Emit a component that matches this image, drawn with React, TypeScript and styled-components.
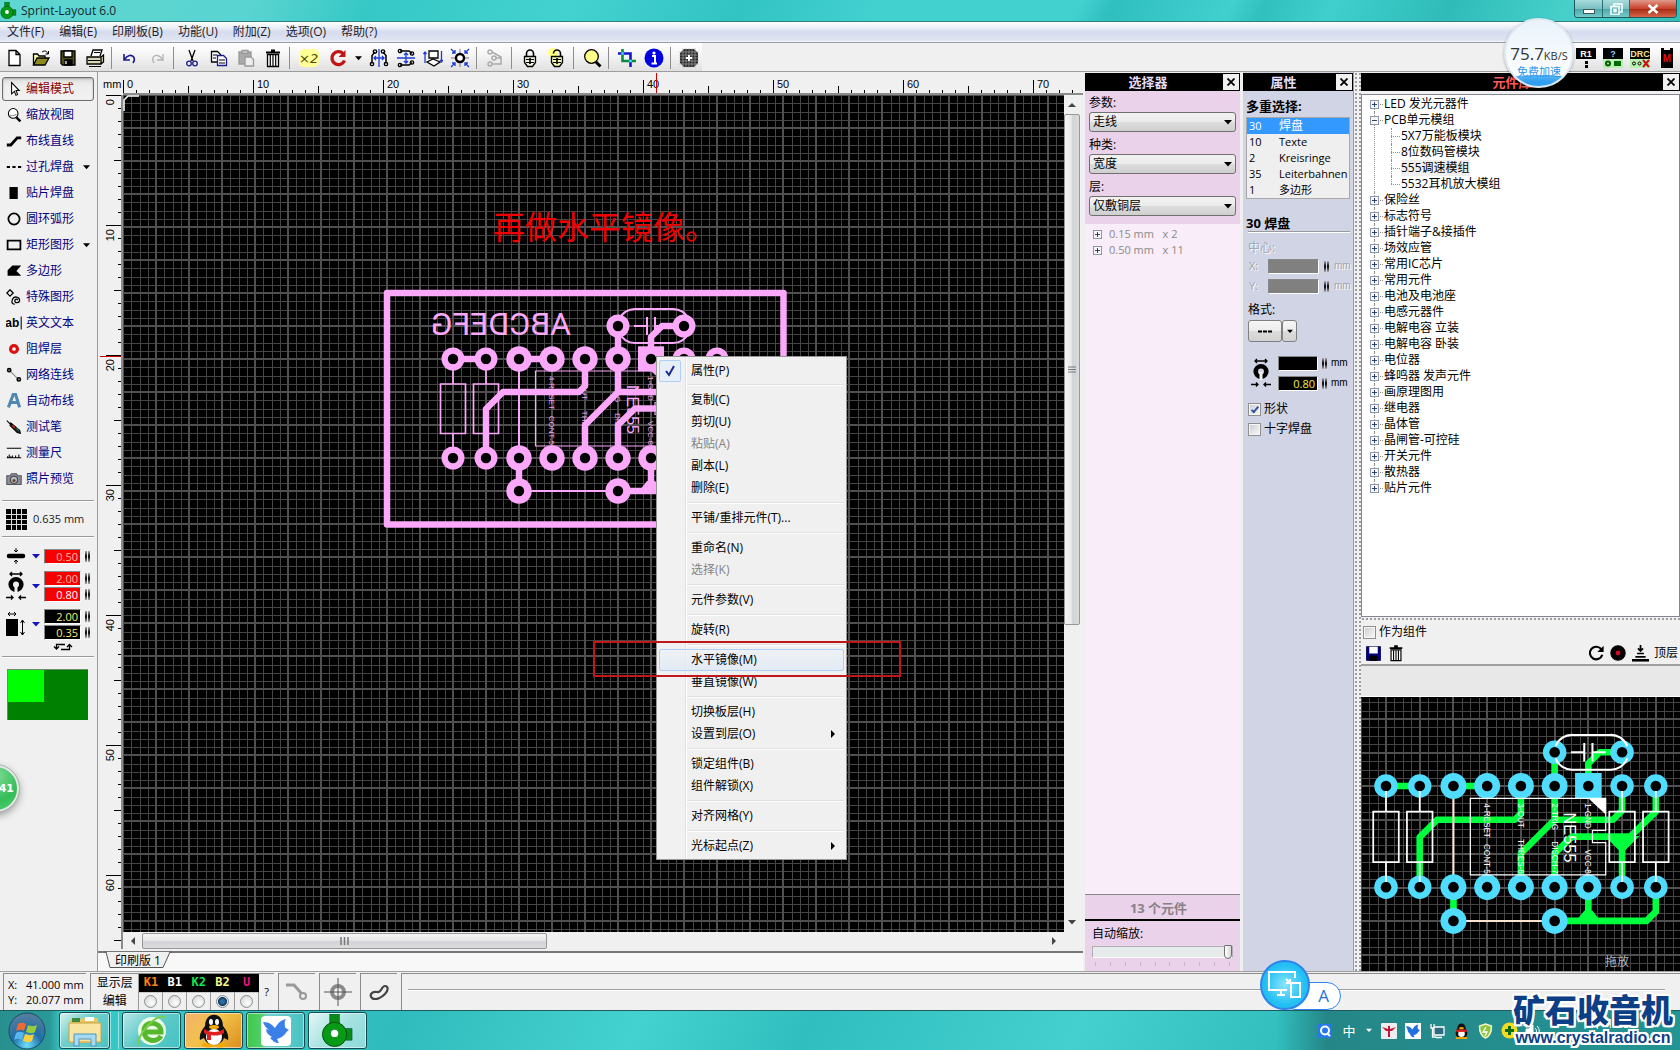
import React from "react";
import styled, { createGlobalStyle, css } from "styled-components";

const UI = `"Open Sans", "Noto Sans CJK SC", sans-serif`;

const Global = createGlobalStyle`
  *, *::before, *::after { box-sizing: border-box; }
  html, body { margin: 0; padding: 0; }
  body { font: 12px/16px ${UI}; color: #000; background: #f0f0f0; }
  button, input, select { font: inherit; color: inherit; margin: 0; padding: 0; border: 0; border-radius: 0; background: none; }
  ul { list-style: none; margin: 0; padding: 0; }
  svg { display: block; }
`;

/* ---------- window frame ---------- */

const Window = styled.div`
  display: flex;
  flex-direction: column;
  min-height: 100vh;
  position: relative;
  overflow: hidden;
`;

const TitleBar = styled.header`
  display: flex;
  justify-content: space-between;
  height: 22px;
  border-bottom: 1px solid #2a7f80;
  background: linear-gradient(115deg, #5ed6d2 0, #5ad4d0 15%, #35c8c6 22%, #44d2d0 34%, #32c3c3 44%, #43d1d0 52%, #43d1d0 64%, #30bfbf 66%, #42d0cf 73%, #32c0bf 75%, #40cfcd 79%, #2fbcb9 86%, #47d0ca 93%, #35bdb7 100%);
`;

const Caption = styled.h1`
  display: flex;
  align-items: center;
  gap: 4px;
  margin: 0;
  padding-right: 12px;
  font-size: 12px;
  font-weight: 400;
  color: #12292b;
`;

const CaptionButtons = styled.div`
  display: flex;
  height: 18px;
  margin-right: 3px;
  border: 1px solid #20595c;
  border-top: 0;
  border-radius: 0 0 4px 4px;
  overflow: hidden;
`;

const CaptionButton = styled.button<{ $close?: boolean }>`
  display: grid;
  place-items: center;
  width: ${p => (p.$close ? 47 : 27)}px;
  border-left: 1px solid #2a6f72;
  background: ${p => (p.$close ? "linear-gradient(#e0998a, #c8432c 50%, #a82c16 55%, #d8674b)" : "linear-gradient(#a9dcdc, #7bc1c2 50%, #4da9ab 55%, #74cccb)")};
  &:first-child { border-left: 0; }
`;

const MenuBar = styled.nav`
  display: flex;
  gap: 15px;
  height: 21px;
  padding: 0 7px;
  border-bottom: 1px solid #9a9ca6;
  background: linear-gradient(#ffffff, #e9edf6 30%, #d6dcee 50%, #dfe4f3 90%, #f4f5fa);
`;

const MenuTitle = styled.button`
  font-size: 12px;
  line-height: 20px;
  color: #1d1d2b;
`;

const ToolBar = styled.div`
  display: flex;
  justify-content: space-between;
  height: 29px;
  border-bottom: 1px solid #9d9d9d;
  background: #f0f0f0;
`;

const ToolGroup = styled.div`
  display: flex;
  align-items: center;
  padding-top: 2px;
  background: linear-gradient(#ffffff, #f6f6f6 40%, #e0e0e0);
`;

const ToolButton = styled.button<{ $w?: number }>`
  display: grid;
  place-items: center;
  width: ${p => p.$w ?? 27}px;
  height: 26px;
`;

const Divider = styled.span`
  width: 1px;
  height: 22px;
  margin: 0 4px 0 3px;
  background: #8e8e8e;
`;

const Workspace = styled.main`
  flex: 1;
  display: grid;
  grid-template-columns: 98px minmax(0, 1fr) 160px 110px 8px 319px;
`;

/* ---------- left tools ---------- */

const ToolPanel = styled.aside`
  border-right: 1px solid #9a9a9a;
`;

const ToolList = styled.div`
  padding: 5px 0 7px;
`;

const Tool = styled.button<{ $active?: boolean }>`
  display: flex;
  align-items: center;
  width: 92px;
  height: 24px;
  margin: 0 3px 2px 2px;
  padding: 0 3px;
  gap: 4px;
  border: 1px solid transparent;
  border-radius: 3px;
  color: #000080;
  white-space: nowrap;
  svg + svg { margin-left: auto; }
  ${p => p.$active && css`
    color: #8b0000;
    border-color: #6f6f6f;
    background: linear-gradient(#dcdcdc, #ededed 30%, #f2f2f2);
    box-shadow: inset 0 1px 2px #aaa;
  `}
`;

const Rule = styled.hr`
  height: 2px;
  margin: 0 3px 0 2px;
  border: 0;
  border-top: 1px solid #9a9a9a;
  border-bottom: 1px solid #fff;
`;

const GridSetting = styled.button`
  display: flex;
  align-items: center;
  gap: 6px;
  height: 34px;
  padding-left: 6px;
  font-size: 11px;
  color: #1b1b1b;
`;

const SizeGroups = styled.div`
  display: flex;
  flex-direction: column;
  gap: 6px;
  padding: 10px 6px 2px;
`;

const SizeGroup = styled.div`
  display: grid;
  grid-template-columns: 20px 18px 37px 1fr;
  align-items: center;
  > svg:nth-child(2) { justify-self: center; margin-left: 2px; }
`;

const Stack = styled.div`
  display: flex;
  flex-direction: column;
`;

const SpinRow = styled.div<{ $h?: number }>`
  display: flex;
  align-items: center;
  gap: 4px;
  height: ${p => p.$h ?? 16}px;
`;

const ValueInput = styled.input<{ $bg: string; $fg: string; $w?: number }>`
  width: ${p => p.$w ?? 37}px;
  flex: none;
  height: 15px;
  padding-right: 2px;
  border: 1px solid #fff;
  border-top-color: #888;
  border-left-color: #888;
  background: ${p => p.$bg};
  color: ${p => p.$fg};
  font-size: 11px;
  line-height: 13px;
  text-align: right;
`;

const SpinHandle = styled.span`
  flex: none;
  justify-self: center;
  width: 5px;
  height: 11px;
  border: 2px solid #1d1d26;
  border-width: 0 2px;
  border-image: linear-gradient(#d6d6d6, #111 45%, #111 55%, #d6d6d6) 1;
  border-image-width: 0 2px;
`;

const SwapRow = styled.div`
  display: flex;
  justify-content: center;
  padding-left: 28px;
  height: 14px;
`;

const PadSwatch = styled.div`
  display: flex;
  width: 81px;
  height: 51px;
  margin: 11px 7px;
  background: #008000;
  border: 1px solid #6b8c6b;
  border-width: 1px 0 0 1px;
  &::before { content: ""; width: 36px; height: 32px; background: #00ff00; }
`;

/* ---------- editor ---------- */

const Editor = styled.section`
  display: grid;
  grid-template-columns: 25px minmax(0, 1fr) 19px;
  grid-template-rows: 23px minmax(0, 1fr) 17px 22px;
  min-height: 600px;
`;

const RulerUnit = styled.div`
  padding: 5px 0 0 5px;
  font: 11px/14px "Liberation Sans", sans-serif;
`;

const RulerTop = styled.div`
  grid-column: 2 / 4;
  position: relative;
  overflow: hidden;
  border-bottom: 2px solid #8b8b8b;
`;

const RulerLeft = styled.div`
  grid-row: 2 / 4;
  position: relative;
  overflow: hidden;
  border-right: 2px solid #8b8b8b;
`;

const FillSvg = styled.svg`
  position: absolute;
  inset: 0;
  width: 100%;
  height: 100%;
`;

const Canvas = styled.div`
  position: relative;
  background: #000;
  overflow: hidden;
`;

const Note = styled.p`
  position: absolute;
  left: 370px;
  top: 108px;
  margin: 0;
  font: 32px/44px "Noto Sans CJK SC", sans-serif;
  color: #f00000;
  white-space: nowrap;
`;

const RedFrame = styled.div`
  position: absolute;
  left: 470px;
  top: 546px;
  width: 308px;
  height: 36px;
  border: 2px solid #c01818;
  pointer-events: none;
`;

const ScrollV = styled.div`
  display: flex;
  flex-direction: column;
  width: 16px;
  background: #f0f0f0;
`;

const ScrollH = styled.div`
  display: flex;
  height: 16px;
  margin-top: 1px;
`;

const ArrowButton = styled.button<{ $v?: boolean }>`
  display: grid;
  place-items: center;
  width: ${p => (p.$v ? 16 : 19)}px;
  height: ${p => (p.$v ? 19 : 16)}px;
`;

const Thumb = styled.div<{ $v?: boolean }>`
  display: grid;
  place-items: center;
  flex: ${p => (p.$v ? "0 0 61%" : "0 0 43%")};
  border: 1px solid #979797;
  border-radius: 2px;
  background: linear-gradient(${p => (p.$v ? "90deg" : "180deg")}, #f5f5f5, #e8e8ea 45%, #d2d3d6 55%, #dcdcde);
`;

const Spacer = styled.span`
  flex: 1;
`;

const TabStrip = styled.div`
  grid-column: 1 / 4;
  margin-top: 2px;
  border-top: 2px solid #777;
  background: #f8f8f8;
`;

const SheetTab = styled.button`
  position: relative;
  display: block;
  width: 68px;
  height: 16px;
  margin-left: 6px;
  line-height: 14px;
  svg { position: absolute; left: 0; top: -2px; }
  span { position: relative; }
`;

/* ---------- context menu ---------- */

const ContextMenu = styled.ul`
  position: absolute;
  left: 533px;
  top: 261px;
  width: 191px;
  padding: 2px;
  border: 1px solid #979797;
  background: linear-gradient(90deg, #f1f1f1 28px, #e0e0e0 28px, #e0e0e0 29px, #fff 29px, #fff 30px, #f0f0f0 30px);
`;

const MenuItem = styled.button<{ $hot?: boolean }>`
  display: grid;
  grid-template-columns: 31px 1fr 12px;
  align-items: center;
  width: 100%;
  height: 22px;
  text-align: left;
  border: 1px solid transparent;
  border-radius: 2px;
  &:disabled { color: #848484; }
  ${p => p.$hot && css`
    border-color: #aecff7;
    background: linear-gradient(#eef2f7cc, #dfe9f5cc);
  `}
`;

const CheckCell = styled.span`
  display: grid;
  place-items: center;
  width: 22px;
  height: 22px;
  margin-left: -1px;
  border: 1px solid #aecff7;
  border-radius: 2px;
  background: #e6eef8;
`;

const MenuRule = styled.li`
  height: 8px;
  margin-left: 28px;
  padding-top: 3px;
  &::before { content: ""; display: block; height: 2px; border-top: 1px solid #e0e0e0; border-bottom: 1px solid #fff; }
`;

/* ---------- docked panels ---------- */

const Dock = styled.aside<{ $bg: string; $pl?: number }>`
  display: flex;
  flex-direction: column;
  padding: 1px ${p => (p.$pl ? 3 : 0)}px 0 ${p => p.$pl ?? 0}px;
  background: ${p => p.$bg};
`;

const PanelTitle = styled.h2<{ $fg?: string }>`
  display: flex;
  align-items: center;
  flex: none;
  height: 18px;
  margin: 0;
  padding-right: 1px;
  background: #000;
  color: ${p => p.$fg ?? "#e4dcf4"};
  font-size: 13px;
  font-weight: 700;
  line-height: 18px;
  span { flex: 1; text-align: center; padding-right: ${p => (p.$fg ? 0 : 12)}px; }
`;

const CloseButton = styled.button`
  display: grid;
  place-items: center;
  width: 16px;
  height: 16px;
  background: #f0f0f0;
`;

const DockBody = styled.div<{ $bg: string; $p?: string; $grow?: boolean }>`
  flex: ${p => (p.$grow ? 1 : "none")};
  padding: ${p => p.$p ?? "0"};
  background: ${p => p.$bg};
`;

const Field = styled.label`
  display: block;
  height: 42px;
  line-height: 18px;
`;

const SelectWrap = styled.span`
  position: relative;
  display: block;
  height: 20px;
  svg { position: absolute; right: 4px; top: 8px; pointer-events: none; }
`;

const Select = styled.select`
  appearance: none;
  width: 100%;
  height: 20px;
  padding-left: 3px;
  border: 1px solid #707070;
  border-radius: 3px;
  background: linear-gradient(#f2f2f2, #ebebeb 50%, #dddddd 51%, #cfcfcf);
`;

const GroupRow = styled.button`
  display: flex;
  align-items: center;
  gap: 7px;
  height: 16px;
  color: #8a8a8a;
  font-size: 11px;
  white-space: pre;
`;

const Count = styled.div`
  height: 27px;
  border-top: 1px solid #888;
  border-bottom: 2px solid #000;
  background: #ead3ea;
  color: #8a8088;
  font-size: 13px;
  font-weight: 700;
  line-height: 26px;
  text-align: center;
  padding-right: 8px;
`;

const SliderLabel = styled.label`
  display: block;
  margin-bottom: 4px;
`;

const Slider = styled.input`
  appearance: none;
  display: block;
  width: 100%;
  height: 12px;
  border: 1px solid #b0b0b0;
  border-bottom-color: #fff;
  background: #e7eaea;
  &::-webkit-slider-thumb {
    appearance: none;
    width: 8px;
    height: 14px;
    border: 1px solid #707070;
    border-radius: 1px 1px 4px 4px;
    background: linear-gradient(90deg, #fff, #d6d6d6);
  }
`;

const Ticks = styled.div`
  display: flex;
  justify-content: space-between;
  margin: 4px 3px 0;
  i { width: 1px; height: 4px; background: #c9b5c9; }
`;

const Heading = styled.h3`
  margin: 0;
  font-size: 13px;
  font-weight: 700;
  line-height: 16px;
`;

const ObjectTable = styled.table`
  width: 104px;
  margin: 3px 0 16px;
  border: 1px solid #a8a8a8;
  border-spacing: 0;
  background: #efefef;
  font-size: 11px;
  td { height: 16px; padding: 0 0 0 2px; line-height: 16px; white-space: nowrap; }
  td:first-child { width: 30px; }
`;

const ObjectRow = styled.tr<{ $on?: boolean }>`
  ${p => p.$on && css`background: #3399ff; color: #fff;`}
  td + td { font-size: ${p => (p.$on ? 12 : 11)}px; }
`;

const Unit = styled.span`
  font: 10px/16px "Liberation Sans", sans-serif;
`;

const Axis = styled.label`
  display: grid;
  grid-template-columns: 19px 51px 15px 1fr;
  align-items: center;
  height: 20px;
  padding-left: 3px;
  font-size: 11px;
  color: #a3a5b0;
  text-shadow: 1px 1px #fff;
`;

const Muted = styled.p`
  height: 23px;
  margin: 0;
  padding: 7px 2px 0;
  color: #a3a5b0;
  text-shadow: 1px 1px #fff;
`;

const FormLabel = styled.p`
  height: 24px;
  margin: 0;
  padding: 6px 2px 0;
`;

const FormRow = styled.div`
  display: flex;
  padding: 0 0 11px 2px;
`;

const FlatButton = styled.button<{ $w: number }>`
  display: grid;
  place-items: center;
  width: ${p => p.$w}px;
  height: 22px;
  border: 1px solid #808080;
  border-radius: 3px;
  background: linear-gradient(#f6f6f6, #ececec 50%, #dcdcdc 52%, #d2d2d2);
`;

const HoleRow = styled.div`
  display: grid;
  grid-template-columns: 27px 1fr;
  align-items: center;
  padding: 0 0 6px 5px;
`;

const CheckLine = styled.label`
  display: flex;
  align-items: center;
  gap: 3px;
  height: 20px;
  padding-left: 2px;
  white-space: nowrap;
`;

const CheckBox = styled.input`
  appearance: none;
  display: grid;
  place-items: center;
  width: 13px;
  height: 13px;
  border: 1px solid #8e8f8f;
  background: linear-gradient(135deg, #c9ccd0, #fafafa);
  box-shadow: inset 0 0 0 1px #f6f6f6;
  &:checked::after {
    content: "";
    width: 4px;
    height: 8px;
    border: solid #33509e;
    border-width: 0 2px 2px 0;
    transform: rotate(40deg);
  }
`;

const dots = "radial-gradient(circle, #9c9c9c 0.7px, transparent 1px) 0 0 / 4px 4px #f0f0f0";

const Splitter = styled.div`
  border-left: 1px solid #9a9a9a;
  background: ${dots};
`;

const SplitterH = styled.div`
  height: 5px;
  background: ${dots};
`;

const TreeBox = styled.div`
  height: 523px;
  margin-top: 3px;
  padding: 1px 0 0 8px;
  border: 1px solid #828790;
  background: #fff;
`;

const Node = styled.li<{ $first?: boolean; $last?: boolean }>`
  position: relative;
  &::before {
    content: "";
    position: absolute;
    left: 4px;
    top: ${p => (p.$first ? 8 : 0)}px;
    bottom: ${p => (p.$last ? "8px" : "0")};
    border-left: 1px dotted #909090;
  }
  ul { padding-left: 17px; }
`;

const NodeRow = styled.button<{ $sel?: boolean }>`
  display: flex;
  align-items: center;
  height: 16px;
  position: relative;
  white-space: nowrap;
  &::before { content: ""; position: absolute; left: 4px; top: 8px; width: 9px; border-top: 1px dotted #909090; }
  svg { position: relative; margin-right: 5px; }
  span { background: ${p => (p.$sel ? "#efefef" : "transparent")}; }
`;

const Gap = styled.i`
  width: 14px;
`;

const PreviewBar = styled.div`
  display: flex;
  align-items: center;
  gap: 5px;
  height: 24px;
  padding: 0 2px 0 4px;
  border-bottom: 2px solid #a0a0a0;
`;

const IconButton = styled.button`
  display: grid;
  place-items: center;
  min-width: 17px;
  height: 20px;
`;

const Blank = styled.div`
  height: 31px;
  border-bottom: 1px solid #fff;
  background: #e8e8e8;
`;

const Preview = styled.div`
  position: relative;
  flex: 1;
  background: #000;
  overflow: hidden;
`;

/* ---------- status bar ---------- */

const StatusBar = styled.footer`
  display: flex;
  gap: 4px;
  height: 39px;
  padding: 1px 0 0 3px;
  border-top: 1px solid #a0a0a0;
  background: #f0f0f0;
`;

const Cell = styled.div<{ $w?: number }>`
  display: flex;
  align-items: center;
  justify-content: center;
  ${p => (p.$w ? `width: ${p.$w}px` : "flex: 1")};
  border-top: 1px solid #8c8c8c;
  border-left: 1px solid #8c8c8c;
`;

const Coords = styled.dl`
  display: grid;
  grid-template-columns: 18px 56px;
  margin: 0;
  font-size: 11px;
  line-height: 15px;
  dt, dd { margin: 0; white-space: nowrap; }
  dd { text-align: right; }
`;

const LayerTable = styled.table`
  border-collapse: collapse;
  text-align: center;
  th, td { padding: 0; font-weight: 400; }
  tbody th { width: 48px; border-right: 1px solid #999; }
  tr { height: 18px; }
  tr + tr td { border-right: 1px solid #999; border-top: 1px solid #ccc; }
`;

const LayerName = styled.td<{ $fg: string }>`
  width: 24px;
  background: #000;
  color: ${p => p.$fg};
  font: 12px/17px "DejaVu Sans Mono", monospace;
  b { font-weight: 700; }
`;

const Radio = styled.input`
  appearance: none;
  display: block;
  width: 13px;
  height: 13px;
  margin: 2px auto;
  border: 1px solid #8e8f8f;
  border-radius: 50%;
  background: radial-gradient(circle at 60% 60%, #fff, #c9cccf);
  &:checked { background: radial-gradient(circle, #2a6ea0 0 2px, #0c3358 4px, #e8e8e8 5px); }
`;

const Help = styled.button`
  width: 15px;
  font-size: 11px;
`;

const StatusLine = styled.span`
  flex: 1;
  height: 2px;
  margin: 0 15px 4px 6px;
  border-top: 1px solid #a0a0a0;
  background: #fff;
`;

/* ---------- taskbar ---------- */

const TaskBar = styled.footer`
  display: flex;
  align-items: stretch;
  gap: 3px;
  height: 40px;
  padding: 1px 0 1px 6px;
  border-top: 1px solid #1b5b60;
  background:
    linear-gradient(90deg, #24807fcc 0, #24807faa 50px, transparent 62px, transparent 76%, #23797bcc 79%, #1f8d8ccc 100%),
    linear-gradient(115deg, #38cccb 0, #30bcbc 24%, #44d2d0 38%, #31bebe 48%, #43d0cf 64%, #2fbcbb 78%, #2fb0ae 100%);
`;

const StartButton = styled.button`
  width: 42px;
  margin-right: 8px;
  display: grid;
  place-items: center;
`;

const TaskButton = styled.button<{ $bg: string; $w?: number }>`
  display: grid;
  place-items: center;
  width: ${p => p.$w ?? 59}px;
  border: 1px solid #164a50;
  border-radius: 3px;
  box-shadow: inset 0 0 0 1px #ffffff88;
  background: ${p => p.$bg};
`;

const StackEdge = styled.i`
  width: 9px;
  margin-left: -3px;
  border: 1px solid #c4efee;
  border-width: 0 1px;
  opacity: 0.7;
`;

const Tray = styled.div`
  display: flex;
  align-items: center;
  gap: 4px;
  margin-left: auto;
  padding-right: 137px;
  color: #fff;
`;

const TrayButton = styled.button<{ $w?: number }>`
  display: grid;
  place-items: center;
  width: ${p => p.$w ?? 20}px;
  height: 24px;
  font-size: 13px;
`;

/* ---------- floating widgets ---------- */

const SpeedBall = styled.div`
  position: absolute;
  right: 106px;
  top: 18px;
  width: 70px;
  height: 70px;
  border: 2px solid #dfe8f0;
  border-radius: 50%;
  overflow: hidden;
  text-align: center;
  white-space: nowrap;
  background: radial-gradient(ellipse 60px 18px at 50% 110%, #2f9df0 0 60%, #58b4f6 96%, transparent 100%), linear-gradient(#eaf3fb, #ffffff);
  box-shadow: 0 1px 3px #0005;
  p { margin: 24px 0 0; font-size: 17px; line-height: 20px; color: #333; }
  small { font-size: 11px; }
  b { display: block; font-size: 11px; font-weight: 400; line-height: 12px; color: #2b95ea; }
`;

const CountBall = styled.div`
  position: absolute;
  left: -28px;
  top: 765px;
  width: 47px;
  height: 47px;
  border: 2px solid #e3e8e4;
  border-radius: 50%;
  outline: 1px solid #a9b3ab;
  background: radial-gradient(circle at 50% 20%, #7fdc96, #35bd58 60%, #4fd070);
  box-shadow: 0 3px 8px #0006;
  color: #fff;
  font: 700 11px/43px "DejaVu Sans", sans-serif;
  text-align: right;
  padding-right: 3px;
`;

const CastBall = styled.button`
  position: absolute;
  right: 370px;
  bottom: 40px;
  width: 50px;
  height: 50px;
  display: grid;
  place-items: center;
  border: 2px solid #2f84ea;
  border-radius: 50%;
  background: radial-gradient(circle, #8be6fb, #24c0f4 60%, #1fb4f0);
`;

const InputPill = styled.button`
  position: absolute;
  right: 339px;
  bottom: 40px;
  width: 60px;
  height: 28px;
  padding-left: 25px;
  border: 1px solid #2f84ea;
  border-radius: 14px;
  background: #fff;
  color: #2474d8;
  font-size: 17px;
`;

const Watermark = styled.div`
  position: absolute;
  right: 7px;
  bottom: 0;
  width: 160px;
  text-align: center;
  white-space: nowrap;
  color: #0d3f86;
  text-shadow: 2px 0 #fff, -2px 0 #fff, 0 2px #fff, 0 -2px #fff, 1px 1px #fff, -1px -1px #fff, 2px 2px #fff, -2px 2px #fff, 2px -2px #fff, -2px -2px #fff;
  strong { display: block; font: 900 32px/36px "Noto Sans CJK SC", sans-serif; }
  a { display: block; color: inherit; text-decoration: none; font: 700 16px/24px "Liberation Sans", sans-serif; }
`;

const Clock = styled.time`
  position: absolute;
  right: 43px;
  bottom: 18px;
  font-size: 12px;
  color: #fff;
`;

/* ---------- drawings ---------- */

function Glyph({ s = 20, children }: { s?: number; children: React.ReactNode }) {
  return (
    <svg width={s} height={s} viewBox="0 0 20 20" fill="none" stroke="#000" strokeWidth="1.3" aria-hidden>
      {children}
    </svg>
  );
}

const Caret = ({ c = "#000", w = 8 }: { c?: string; w?: number }) => (
  <svg width={w} height="5" viewBox="0 0 8 5" aria-hidden><path d="M0 0h8L4 4.5z" fill={c} /></svg>
);

const Cross = () => (
  <svg width="8" height="8" viewBox="0 0 8 8" aria-hidden><path d="M.5.5l7 7M7.5.5l-7 7" stroke="#000" strokeWidth="1.8" /></svg>
);

const Expander = ({ open }: { open?: boolean }) => (
  <svg width="9" height="9" viewBox="0 0 9 9" aria-hidden>
    <rect x=".5" y=".5" width="8" height="8" fill="#f8f8f8" stroke="#8c96a6" />
    <path d={open ? "M2 4.5h5" : "M2 4.5h5M4.5 2v5"} stroke="#2c4270" />
  </svg>
);

const Trash = ({ s = 20 }: { s?: number }) => (
  <Glyph s={s}>
    <path d="M4.500 6.500h11v12h-11z" fill="#fff" />
    <path d="M3 4.500h14M8 2.500h4" strokeWidth="2" />
    <path d="M7.300 7v11M10 7v11M12.700 7v11" strokeWidth="1.200" />
  </Glyph>
);

const Padlock = ({ open }: { open?: boolean }) => (
  <Glyph>
    {open && <circle cx="6" cy="5" r="5" fill="#ffff80" stroke="none" />}
    <path d={open ? "M13.500 9V5.500a3.500 3.500 0 0 0-7 0" : "M6.500 9V5.500a3.500 3.500 0 0 1 7 0V9"} strokeWidth="1.600" />
    <path d="M4.500 8.500h11v6l-3 4h-5l-3-4z" fill={open ? "#f4f4b8" : "#f0f0e0"} />
    <path d="M6 11.500h8M6 14.500h8" strokeWidth="1" />
    <path d="M10 10v6" strokeWidth="1.600" />
  </Glyph>
);

const HoleIcon = () => (
  <svg width="20" height="30" viewBox="0 0 20 30" fill="none" stroke="#000" aria-hidden>
    <path d="M4 3h12M6 1L4 3l2 2M14 1l2 2-2 2" strokeWidth="1.300" />
    <circle cx="10" cy="13.500" r="5.300" strokeWidth="4.600" />
    <path d="M10 14v8" stroke="#f0f0f0" strokeWidth="3" />
    <path d="M0 26.500h7M5 24.500l2 2-2 2M20 26.500h-7M15 24.500l-2 2 2 2" strokeWidth="1.300" />
  </svg>
);

const SprintLogo = ({ s }: { s: number }) => (
  <svg width={s} height={s} viewBox="0 0 32 34" aria-hidden>
    <path d="M8 0h10v12H8zM18 15h13v12H18z" fill="#0a8a18" stroke="#055" strokeWidth=".6" />
    <circle cx="13" cy="21" r="12.500" fill="#079a16" stroke="#044d0a" />
    <circle cx="13" cy="20" r="3.800" fill="#fff" />
  </svg>
);

function Grid({ ox, oy, pitch }: { ox: number; oy: number; pitch: number }) {
  const ks = Array.from({ length: 330 }, (_, i) => i - 8);
  const major = ks.filter(k => k % 4 === 0);
  const minor = ks.filter(k => k % 4 !== 0);
  const draw = (list: number[]) =>
    list.map(k => `M${Math.round(ox + (k * pitch) / 4)} 0v2000M0 ${Math.round(oy + (k * pitch) / 4)}h3000`).join("");
  return (
    <g shapeRendering="crispEdges">
      <path d={draw(minor)} stroke="#454545" strokeWidth="1" transform="translate(.5 .5)" />
      <path d={draw(major)} stroke="#505050" strokeWidth="2" />
    </g>
  );
}

interface BoardProps {
  x: number;
  y: number;
  k: number;
  copper: string;
  pad: string;
  silk: string;
  wire: string;
}

function Board({ x, y, k, copper, pad, silk, wire }: BoardProps) {
  const small = [[0, 0], [1, 0], [7, 0], [8, 0], [0, 3], [1, 3], [7, 3], [8, 3], [5, -1], [7, -1]];
  const big = [[2, 0], [3, 0], [4, 0], [5, 0], [2, 3], [3, 3], [4, 3], [5, 3], [6, 3], [2, 4], [5, 4]];
  const pins: [number, string, string][] = [
    [99, "4-RESET", "CONT-5"],
    [132, "3-OUT", "THRES-6"],
    [165, "2-TRIG", "DISCH-7"],
    [198, "1-GND", "VCC-8"],
  ];
  return (
    <g transform={`translate(${x} ${y}) scale(${k})`}>
      <g fill="none" stroke={copper} strokeWidth="6.500" strokeLinejoin="round">
        <path d="M0 0H33M66 0H99M33 99V50L50 33H126L132 27V0M165-33V33L132 66V99M165 33H222L231 24V0" />
        <path d="M165 99V66L182 49.500H239L264 25V0M231 99V50M198 0V-22L209-33H231M66 99V132M165 132H255L264 123V99M198 99V132" />
      </g>
      <path d="M214 49H248L231 66zM186 132L194 122H202L210 132z" fill={copper} />
      <path d="M66 0V99M66 132H165" stroke={wire} strokeWidth="2" />
      <g fill={pad}>
        {small.map(([a, b]) => <circle key={`${a},${b}`} cx={a * 33} cy={b * 33} r="11.500" />)}
        {big.map(([a, b]) => <circle key={`${a},${b}`} cx={a * 33} cy={b * 33} r="12.700" />)}
        <rect x="185" y="-12.700" width="26" height="25" />
      </g>
      <g fill="#000">
        {[...small, ...big, [6, 0]].map(([a, b]) => <circle key={`${a},${b}`} cx={a * 33} cy={b * 33} r="5.200" />)}
      </g>
      <g fill="none" stroke={silk} strokeWidth="1.700">
        {[0, 33, 231, 264].map(c => <path key={c} d={`M${c} 5V25M${c} 74V94M${c - 12.5} 25h25v49.500h-25z`} />)}
        <path d="M215 12H82.500V87H215V55.500H202V43.500H215z" strokeWidth="1.200" />
        <path d="M166-27A17 17 0 0 0 183-16H219A17 17 0 0 0 236-27M166-39A17 17 0 0 1 183-50H219A17 17 0 0 1 236-39" strokeWidth="2" />
        <path d="M181-33H194M194-42V-24M202-42V-24M202-33H215" strokeWidth="2" />
      </g>
      <path d="M198 12h17v16z" fill={silk} />
      <g fill={silk} fontFamily="'Liberation Sans', sans-serif" fontSize="8">
        {pins.map(([px, a, b]) => (
          <g key={px} transform={`translate(${px - 3} 17) rotate(90)`}>
            <text>{a}</text>
            <text x="69" textAnchor="end">{b}</text>
          </g>
        ))}
        <text transform="translate(174 26) rotate(90)" fontSize="16">NE555</text>
      </g>
    </g>
  );
}

const topIcons: { w?: number; icon: React.ReactNode | "|" }[] = [
  { icon: <Glyph><path d="M5 2.500h7l4 4v11H5zM12 2.500v4h4" fill="#fff" /></Glyph> },
  { icon: <Glyph><path d="M2.500 17V6h4l1.500 2h6v2" fill="#ffffb0" /><path d="M2.500 17l3.500-7h12l-4 7z" fill="#8a8a20" /><path d="M11 4c3-2 5-1 6 2M17.500 3v3h-3" strokeWidth="1" /></Glyph> },
  { icon: <Glyph><path d="M3 3h14v14H4.500L3 15.500z" fill="#4e4e18" /><path d="M6 3h8v6H6z" fill="#fff" /><path d="M7 12h7v5H7z" fill="#000" /><path d="M8 13v3" stroke="#fff" /></Glyph> },
  { icon: <Glyph><path d="M6 8l2-6h9l-2 6" fill="#fff" /><path d="M2 9h14v7H2zM16 9l2.500-2v7L16 16" fill="#d8d8b0" /><path d="M3 12.500h12M4 18.500h12M9 4.500h6" strokeWidth="1.100" /></Glyph> },
  { icon: "|" },
  { icon: <Glyph><path d="M4 6v6h6M4.500 11.500C7 7 12 6 14 9.500c1 2 0 4-1 5.500" stroke="#1c1c90" strokeWidth="1.600" /></Glyph> },
  { icon: <Glyph><path d="M16 6v6h-6M15.500 11.500C13 7 8 6 6 9.500c-1 2 0 4 1 5.500" stroke="#b4b4b4" strokeWidth="1.300" /></Glyph> },
  { icon: "|" },
  { icon: <Glyph><path d="M7 2l4 11M13 2L9 13" /><circle cx="7" cy="15.500" r="2.300" stroke="#1c1c90" /><circle cx="13" cy="15.500" r="2.300" stroke="#1c1c90" /></Glyph> },
  { icon: <Glyph><path d="M2.500 3.500h6l3 3V14h-9z" fill="#fff" /><path d="M8.500 7.500h6l3 3v7h-9z" fill="#fff" stroke="#1c1c90" /><path d="M4 7h4M4 10h3M10 12h6M10 15h6" strokeWidth="1" /></Glyph> },
  { icon: <Glyph><path d="M3 4h12v12H3z" fill="#aaa" stroke="#999" /><path d="M6 2.500h6v3H6z" fill="#ccc" stroke="#999" /><path d="M9 9h6l2.500 2.500V18H9z" fill="#eee" stroke="#999" /></Glyph> },
  { icon: <Trash /> },
  { icon: "|" },
  { w: 30, icon: <svg width="20" height="18" viewBox="0 0 20 18" aria-hidden><rect width="20" height="18" rx="5" fill="#ffff9a" /><text x="0" y="14" fontFamily="'DejaVu Sans', sans-serif" fontSize="13" fontStyle="italic" fill="#4a4a00">×2</text></svg> },
  { icon: <Glyph><path d="M15 5.500a6.500 6.500 0 1 0 1.500 7" stroke="#c01515" strokeWidth="3.400" /><path d="M17.500 2v7h-7z" fill="#c01515" stroke="none" /></Glyph> },
  { w: 14, icon: <Caret w={7} /> },
  { icon: <Glyph><path d="M10 1v18M5 10h10M7 8l-2 2 2 2M13 8l2 2-2 2" stroke="#1c3cd8" /><path d="M6 4L3 7.500v8M14 4l3 3.500v8" strokeWidth="1.500" /><circle cx="6" cy="3.500" r="1.700" /><circle cx="3" cy="16" r="1.700" /><circle cx="14" cy="3.500" r="1.700" /><circle cx="17" cy="16" r="1.700" /></Glyph> },
  { icon: <Glyph><path d="M1 10h18M10 6v8M8 7l2-2 2 2M8 13l2 2 2-2" stroke="#1c3cd8" /><path d="M4 3h9l3 2.500M4 17h9l3-2.500" strokeWidth="1.500" /><circle cx="4" cy="3" r="1.700" /><circle cx="16" cy="5.500" r="1.700" /><circle cx="4" cy="17" r="1.700" /><circle cx="16" cy="14.500" r="1.700" /></Glyph> },
  { icon: <Glyph><path d="M6 3h9v7H6z" fill="#fff" /><path d="M4 14l6-3 7 3-6 4z" fill="#fff" /><path d="M2 15V4M.5 6L2 4l1.500 2M18.500 3v11M17 12l1.500 2 1.500-2" stroke="#1c3cd8" /></Glyph> },
  { icon: <Glyph><path d="M10 1v18M1 10h18" stroke="#777" strokeWidth="1" /><circle cx="10" cy="10" r="4" strokeWidth="2.400" fill="#fff" /><path d="M1 1l4 4M5 2v3H2M19 1l-4 4M15 2v3h3M1 19l4-4M5 18v-3H2M19 19l-4-4M15 18v-3h3" stroke="#1c3cd8" /></Glyph> },
  { icon: "|" },
  { icon: <Glyph><g stroke="#aaa" strokeWidth="1.500"><circle cx="5" cy="4" r="2" /><circle cx="5" cy="16" r="2" /><circle cx="9" cy="10" r="2" /><path d="M7 4l9 5v7H7M11 10h5" /></g></Glyph> },
  { icon: "|" },
  { icon: <Padlock /> },
  { icon: <Padlock open /> },
  { icon: "|" },
  { icon: <Glyph><circle cx="9.500" cy="8.500" r="6.800" fill="#ffff8a" /><path d="M14 14l4.500 4.500" strokeWidth="3" /></Glyph> },
  { icon: "|" },
  { icon: <Glyph><path d="M5.500 1v12h13.500" stroke="#0a8a3c" strokeWidth="2.600" /><path d="M1 5.500h12.500V19" stroke="#1616c8" strokeWidth="2.600" /><path d="M4.200 4.200h2.600v2.600H4.200zM12.200 11.700h2.600v2.600h-2.600z" fill="#40e0ff" stroke="none" /></Glyph> },
  { icon: <Glyph><circle cx="10" cy="10" r="9.500" fill="#0000e0" stroke="none" /><path d="M8 8h3v7M7.500 15.500h5.500" stroke="#fff" strokeWidth="2" /><circle cx="10" cy="5" r="1.600" fill="#fff" stroke="none" /></Glyph> },
  { icon: "|" },
  { icon: <Glyph><path d="M5 1h10l4 4v10l-4 4H5l-4-4V5z" fill="#2a2a2a" stroke="none" /><path d="M4 0v20M7 0v20M10 0v20M13 0v20M16 0v20M0 4h20M0 7h20M0 10h20M0 13h20M0 16h20" stroke="#b4b4b4" strokeWidth=".6" /><path d="M7 10h6M10 7v6" stroke="#fff" strokeWidth="2" /></Glyph> },
];

const Badge = ({ t, fg, children }: { t: string; fg: string; children?: React.ReactNode }) => (
  <svg width="20" height="20" viewBox="0 0 20 20" aria-hidden>
    <rect width="20" height="11" fill="#000" />
    <text x="10" y="9" textAnchor="middle" fontFamily="'Liberation Sans', sans-serif" fontWeight="700" fontSize="9" fill={fg}>{t}</text>
    {children}
  </svg>
);

const tools: { name: string; icon: React.ReactNode; active?: boolean; drop?: boolean }[] = [
  { name: "编辑模式", active: true, icon: <path d="M7 2v14l3.500-3 2 5 2-1-2-5h4z" fill="#fff" /> },
  { name: "缩放视图", icon: <><circle cx="9" cy="8" r="6" fill="#fff" /><path d="M13 13l5 5" strokeWidth="3" /><path d="M5 10c3 2 5 1 8-1" stroke="#999" /></> },
  { name: "布线直线", icon: <path d="M1 15h5L14 6h5" strokeWidth="3.500" /> },
  { name: "过孔焊盘", drop: true, icon: <path d="M1 10h4M8 10h4M15 10h4" strokeWidth="2.500" /> },
  { name: "贴片焊盘", icon: <path d="M5 3h9v14H5z" fill="#000" /> },
  { name: "圆环弧形", icon: <circle cx="10" cy="10" r="7" strokeWidth="2.200" /> },
  { name: "矩形图形", drop: true, icon: <path d="M2 4.500h16v11H2z" strokeWidth="2.200" /> },
  { name: "多边形", icon: <path d="M8 3h11l-6 7 6 6H2V9z" fill="#000" stroke="none" /> },
  { name: "特殊图形", icon: <><path d="M5 1l4 4-4 4-4-4z" strokeWidth="1.600" /><path d="M14 14c1-2-3-2-3 1s6 3 6-1-7-6-9-1 1 6 3 6" strokeWidth="1.600" /></> },
  { name: "英文文本", icon: <><text x="-1" y="15" fontFamily="'Liberation Sans', sans-serif" fontWeight="700" fontSize="15" fill="#000" stroke="none">ab</text><path d="M19 2v16" /></> },
  { name: "阻焊层", icon: <circle cx="10" cy="10" r="4.300" stroke="#dd1010" strokeWidth="4" fill="#fff" /> },
  { name: "网络连线", icon: <><path d="M4 4l12 12" stroke="#888" /><circle cx="4" cy="4" r="2" strokeWidth="2" /><circle cx="16" cy="15.500" r="2" strokeWidth="2" /></> },
  { name: "自动布线", icon: <path d="M3 18L9 2h3l5 16M6 12h8" stroke="#4f87b0" strokeWidth="3.800" /> },
  { name: "测试笔", icon: <><path d="M1 2l5 5" /><path d="M6 5l11 9 1 4-4-1L5 8z" fill="#222" /><path d="M8 8l3 3" stroke="#e02020" strokeWidth="2" /><path d="M13 11l3 4" stroke="#2d8a4d" /></> },
  { name: "测量尺", icon: <path d="M1 4h18M1 16h18M4 12v4M8 13v3M12 13v3M16 12v4M2 14v2M6 14v2" /> },
  { name: "照片预览", icon: <><path d="M1 6h4l2-2.500h6L15 6h4v11H1z" fill="#8c8ca0" stroke="#555" /><circle cx="10" cy="11" r="4.500" fill="#bbb" stroke="#444" /><circle cx="10" cy="12" r="2" fill="#604830" stroke="none" /></> },
];

type Entry = { t: string; off?: boolean; check?: boolean; hot?: boolean; sub?: boolean } | "-";
const menu: Entry[] = [
  { t: "属性(P)", check: true }, "-",
  { t: "复制(C)" }, { t: "剪切(U)" }, { t: "粘贴(A)", off: true }, { t: "副本(L)" }, { t: "删除(E)" }, "-",
  { t: "平铺/重排元件(T)..." }, "-",
  { t: "重命名(N)" }, { t: "选择(K)", off: true }, "-",
  { t: "元件参数(V)" }, "-",
  { t: "旋转(R)" }, "-",
  { t: "水平镜像(M)", hot: true }, { t: "垂直镜像(W)" }, "-",
  { t: "切换板层(H)" }, { t: "设置到层(O)", sub: true }, "-",
  { t: "锁定组件(B)" }, { t: "组件解锁(X)" }, "-",
  { t: "对齐网格(Y)" }, "-",
  { t: "光标起点(Z)", sub: true },
];

const library = ["LED 发光元器件", "PCB单元模组", "保险丝", "标志符号", "插针端子&接插件", "场效应管", "常用IC芯片", "常用元件", "电池及电池座", "电感元器件", "电解电容 立装", "电解电容 卧装", "电位器", "蜂鸣器 发声元件", "画原理图用", "继电器", "晶体管", "晶闸管-可控硅", "开关元件", "散热器", "贴片元件"];
const modules = ["5X7万能板模块", "8位数码管模块", "555调速模组", "5532耳机放大模组"];

const objects: [string, string][] = [["30", "焊盘"], ["10", "Texte"], ["2", "Kreisringe"], ["35", "Leiterbahnen"], ["1", "多边形"]];
const layers: [string, string][] = [["K1", "#ff7f10"], ["B1", "#ffffff"], ["K2", "#10e850"], ["B2", "#f6f68c"], ["U", "#e8107c"]];

const PINK = "#fba8fb";
const ticks = Array.from({ length: 230 }, (_, i) => i);

function Choice({ label, value }: { label: string; value: string }) {
  return (
    <Field>
      {label}
      <SelectWrap>
        <Select defaultValue={value}><option>{value}</option></Select>
        <Caret />
      </SelectWrap>
    </Field>
  );
}

function Value({ label, v, bg, fg }: { label: string; v: string; bg: string; fg: string }) {
  return (
    <SpinRow>
      <ValueInput aria-label={label} defaultValue={v} $bg={bg} $fg={fg} />
      <SpinHandle />
    </SpinRow>
  );
}

export default function App() {
  return (
    <Window>
      <Global />
      <TitleBar>
        <Caption><SprintLogo s={17} />Sprint-Layout 6.0</Caption>
        <CaptionButtons>
          <CaptionButton aria-label="最小化"><svg width="12" height="10"><rect x=".5" y="5.500" width="11" height="4" fill="#fff" stroke="#3a5a5c" /></svg></CaptionButton>
          <CaptionButton aria-label="还原"><svg width="13" height="12" fill="none" stroke="#fff" strokeWidth="1.500"><path d="M4 3V1h8v8h-2M1 3.500h8v8H1zM4 6.500h2v2H4z" /></svg></CaptionButton>
          <CaptionButton aria-label="关闭" $close><svg width="12" height="10"><path d="M1.500 1l9 8M10.500 1l-9 8" stroke="#fff" strokeWidth="2.500" /></svg></CaptionButton>
        </CaptionButtons>
      </TitleBar>
      <MenuBar>
        {["文件(F)", "编辑(E)", "印刷板(B)", "功能(U)", "附加(Z)", "选项(O)", "帮助(?)"].map(t => <MenuTitle key={t}>{t}</MenuTitle>)}
      </MenuBar>
      <ToolBar>
        <ToolGroup>
          {topIcons.map(({ icon, w }, i) => (icon === "|" ? <Divider key={i} /> : <ToolButton key={i} $w={w}>{icon}</ToolButton>))}
        </ToolGroup>
        <ToolGroup>
          <ToolButton><Badge t="R1" fg="#fff"><path d="M9 13h3v3H9zM9 17h3v3H9z" /></Badge></ToolButton>
          <ToolButton><Badge t="?" fg="#8fd0ff"><path d="M0 11h20v9H0z" fill="#b9f0b0" /><circle cx="5" cy="15.500" r="2" fill="none" stroke="#055c05" strokeWidth="2" /><path d="M11 13h7v5h-7z" fill="#076a07" /></Badge></ToolButton>
          <ToolButton><Badge t="DRC" fg="#f0e090"><path d="M0 11h20v9H0z" fill="#b9f0b0" /><circle cx="4" cy="15.500" r="1.500" fill="none" stroke="#000" /><circle cx="9.500" cy="15.500" r="1.500" fill="none" stroke="#000" /><path d="M13 12l6 7M19 12l-6 7" stroke="#d01010" strokeWidth="2" /></Badge></ToolButton>
          <ToolButton><svg width="12" height="20"><path d="M0 0h3v2h6V0h3v20H0z" /><text x="6" y="14" textAnchor="middle" fontFamily="'Liberation Sans', sans-serif" fontWeight="700" fontSize="10" fill="#e01010">M</text></svg></ToolButton>
        </ToolGroup>
      </ToolBar>

      <Workspace>
        <ToolPanel>
          <ToolList>
            {tools.map(t => (
              <Tool key={t.name} $active={t.active}>
                <Glyph s={16}>{t.icon}</Glyph>
                {t.name}
                {t.drop && <Caret w={7} />}
              </Tool>
            ))}
          </ToolList>
          <Rule />
          <GridSetting>
            <svg width="21" height="21" viewBox="0 0 21 21"><path d="M0 0h21v21H0z" /><path d="M0 5.500h21M0 10.500h21M0 15.500h21M5.500 0v21M10.500 0v21M15.500 0v21" stroke="#ddd" /></svg>
            0.635 mm
          </GridSetting>
          <Rule />
          <SizeGroups>
            <SizeGroup>
              <svg width="20" height="16" viewBox="0 0 20 16"><path d="M3 8h14" stroke="#000" strokeWidth="4.500" strokeLinecap="round" /><path d="M10 0v4M8 2l2 2 2-2M10 16v-4M8 14l2-2 2 2" stroke="#000" fill="none" /></svg>
              <Caret c="#1414c0" />
              <Value label="线宽" v="0.50" bg="#f80000" fg="#ffb8a0" />
            </SizeGroup>
            <SizeGroup>
              <HoleIcon />
              <Caret c="#1414c0" />
              <Stack>
                <Value label="焊盘外径" v="2.00" bg="#f80000" fg="#ffb8a0" />
                <Value label="焊盘孔径" v="0.80" bg="#f80000" fg="#ffffff" />
              </Stack>
            </SizeGroup>
            <SizeGroup>
              <svg width="20" height="26" viewBox="0 0 20 26"><path d="M0 8h12v17H0z" /><path d="M2 3h8M4 1L2 3l2 2M8 1l2 2-2 2M16.500 9v15M14.500 12l2-3 2 3M14.500 21l2 3 2-3" stroke="#000" fill="none" /></svg>
              <Caret c="#1414c0" />
              <Stack>
                <Value label="贴片宽度" v="2.00" bg="#000000" fg="#f4f070" />
                <Value label="贴片高度" v="0.35" bg="#000000" fg="#f4f070" />
              </Stack>
            </SizeGroup>
          </SizeGroups>
          <SwapRow><svg width="20" height="10" viewBox="0 0 20 10" fill="none" stroke="#000"><path d="M12 2.500H3.500v4M1 4.500l2.500 2.500 2.500-2.500M8 7.500h8.500v-4M14 5l2.500-2.500L19 5" strokeWidth="1.300" /></svg></SwapRow>
          <Rule />
          <PadSwatch />
        </ToolPanel>

        <Editor>
          <RulerUnit>mm</RulerUnit>
          <RulerTop>
            <FillSvg fontFamily="'Liberation Sans', sans-serif" fontSize="11">
              <path d={ticks.map(k => `M${k * 13 + 0.5} 21V${k % 10 === 0 ? 8 : k % 5 === 0 ? 14 : 18}`).join("")} stroke="#000" />
              {ticks.filter(k => k % 10 === 0).map(k => <text key={k} x={k * 13 + 4} y="16">{k}</text>)}
              <path d="M533.5 1V21" stroke="#d00000" />
            </FillSvg>
          </RulerTop>
          <RulerLeft>
            <FillSvg fontFamily="'Liberation Sans', sans-serif" fontSize="11">
              <path d={ticks.map(k => `M23 ${k * 13 + 0.5}H${k % 10 === 0 ? 8 : k % 5 === 0 ? 16 : 20}`).join("")} stroke="#000" />
              {ticks.filter(k => k % 10 === 0).map(k => <text key={k} transform={`translate(16 ${k * 13 + 4}) rotate(-90)`} textAnchor="end">{k}</text>)}
              <path d="M2 261.500H23" stroke="#d00000" />
            </FillSvg>
          </RulerLeft>
          <Canvas>
            <FillSvg>
              <Grid ox={0} oy={0} pitch={33.02} />
              <path d="M1 16V5L5 1H16" stroke="#fff" fill="none" strokeWidth="1.500" />
              <rect x="264" y="198" width="396.500" height="231.500" fill="none" stroke={PINK} strokeWidth="6.500" strokeLinejoin="round" />
              <text transform="translate(448 240) scale(-1 1)" fontFamily="Roboto, sans-serif" fontWeight="400" fontSize="32" fill={PINK}>ABCDEFG</text>
              <Board x={330} y={264} k={1} copper={PINK} pad={PINK} silk={PINK} wire={PINK} />
            </FillSvg>
            <Note>再做水平镜像。</Note>
            <ContextMenu>
              {menu.map((m, i) =>
                m === "-" ? <MenuRule key={i} /> : (
                  <li key={i}>
                    <MenuItem disabled={m.off} $hot={m.hot}>
                      {m.check ? <CheckCell><svg width="12" height="12"><path d="M2 6l3 4 5-9" fill="none" stroke="#1a2a90" strokeWidth="2" /></svg></CheckCell> : <span />}
                      <span>{m.t}</span>
                      {m.sub ? <svg width="4" height="8"><path d="M0 0l4 4-4 4z" /></svg> : <span />}
                    </MenuItem>
                  </li>
                )
              )}
            </ContextMenu>
            <RedFrame />
          </Canvas>
          <ScrollV>
            <ArrowButton $v aria-label="向上"><svg width="8" height="5"><path d="M0 5l4-4 4 4z" fill="#444" /></svg></ArrowButton>
            <Thumb $v><svg width="8" height="7"><path d="M0 1h8M0 3.500h8M0 6h8" stroke="#777" /></svg></Thumb>
            <Spacer />
            <ArrowButton $v aria-label="向下"><Caret c="#444" /></ArrowButton>
          </ScrollV>
          <ScrollH>
            <ArrowButton aria-label="向左"><svg width="5" height="8"><path d="M5 0L1 4l4 4z" fill="#444" /></svg></ArrowButton>
            <Thumb><svg width="9" height="8"><path d="M1 0v8M4.500 0v8M8 0v8" stroke="#777" strokeWidth="1.500" /></svg></Thumb>
            <Spacer />
            <ArrowButton aria-label="向右"><svg width="5" height="8"><path d="M0 0l4 4-4 4z" fill="#444" /></svg></ArrowButton>
          </ScrollH>
          <TabStrip>
            <SheetTab>
              <svg width="68" height="18"><path d="M0 1h2l4 15.500h53L66 1h2" fill="#f0f0f0" stroke="#555" /></svg>
              <span>印刷版 1</span>
            </SheetTab>
          </TabStrip>
        </Editor>

        <Dock $bg="#f0f0f0" $pl={2}>
          <PanelTitle><span>选择器</span><CloseButton aria-label="关闭选择器"><Cross /></CloseButton></PanelTitle>
          <DockBody $bg="#ead3ea" $p="3px 4px 4px">
            <Choice label="参数:" value="走线" />
            <Choice label="种类:" value="宽度" />
            <Choice label="层:" value="仅敷铜层" />
          </DockBody>
          <DockBody $bg="#f8edf8" $p="2px 8px" $grow>
            <GroupRow><Expander />{"0.15 mm   x 2"}</GroupRow>
            <GroupRow><Expander />{"0.50 mm   x 11"}</GroupRow>
          </DockBody>
          <Count>13 个元件</Count>
          <DockBody $bg="#ead3ea" $p="5px 7px 5px">
            <SliderLabel htmlFor="autozoom">自动缩放:</SliderLabel>
            <Slider id="autozoom" type="range" min="0" max="9" defaultValue="9" />
            <Ticks>{ticks.slice(0, 10).map(i => <i key={i} />)}</Ticks>
          </DockBody>
        </Dock>

        <Dock $bg="#d0d4e4">
          <PanelTitle><span>属性</span><CloseButton aria-label="关闭属性"><Cross /></CloseButton></PanelTitle>
          <DockBody $bg="transparent" $p="7px 0 0 3px">
            <Heading>多重选择:</Heading>
            <ObjectTable>
              <tbody>{objects.map(([n, t], i) => <ObjectRow key={t} $on={i === 0}><td>{n}</td><td>{t}</td></ObjectRow>)}</tbody>
            </ObjectTable>
            <Heading>30 焊盘</Heading>
            <Rule />
            <Muted>中心:</Muted>
            {["X:", "Y:"].map(a => (
              <Axis key={a}>{a}<ValueInput disabled $bg="#808080" $fg="#fff" $w={51} /><SpinHandle /><Unit>mm</Unit></Axis>
            ))}
            <FormLabel>格式:</FormLabel>
            <FormRow>
              <FlatButton $w={34} aria-label="线型"><svg width="14" height="3"><path d="M0 1.500h4M5 1.500h4M10 1.500h4" stroke="#000" strokeWidth="2" /></svg></FlatButton>
              <FlatButton $w={15} aria-label="选择线型"><Caret w={6} /></FlatButton>
            </FormRow>
            <HoleRow>
              <HoleIcon />
              <Stack>
                {["", "0.80"].map(v => (
                  <SpinRow key={v} $h={20}><ValueInput aria-label="孔径" defaultValue={v} $bg="#000" $fg="#f4f040" $w={40} /><SpinHandle /><Unit>mm</Unit></SpinRow>
                ))}
              </Stack>
            </HoleRow>
            <CheckLine><CheckBox type="checkbox" defaultChecked />形状</CheckLine>
            <CheckLine><CheckBox type="checkbox" />十字焊盘</CheckLine>
          </DockBody>
        </Dock>

        <Splitter />

        <Dock $bg="#f0f0f0">
          <PanelTitle $fg="#ff5a5a"><span>元件库</span><CloseButton aria-label="关闭元件库"><Cross /></CloseButton></PanelTitle>
          <TreeBox>
            <ul>
              {library.map((name, i) => (
                <Node key={name} $first={i === 0} $last={i === library.length - 1}>
                  <NodeRow><Expander open={i === 1} /><span>{name}</span></NodeRow>
                  {i === 1 && (
                    <ul>
                      {modules.map((m, j) => (
                        <Node key={m} $last={j === 3}><NodeRow $sel={j === 2}><Gap /><span>{m}</span></NodeRow></Node>
                      ))}
                    </ul>
                  )}
                </Node>
              ))}
            </ul>
          </TreeBox>
          <SplitterH />
          <CheckLine><CheckBox type="checkbox" />作为组件</CheckLine>
          <PreviewBar>
            <IconButton aria-label="保存"><Glyph s={17}><path d="M2 2h16v16H2z" fill="#000080" stroke="#000050" /><path d="M5 2h10v8H5z" fill="#fff" stroke="none" /><path d="M6 13h8v5H6z" fill="#000" /></Glyph></IconButton>
            <IconButton aria-label="删除"><Trash s={18} /></IconButton>
            <Spacer />
            <IconButton aria-label="旋转"><Glyph s={18}><path d="M16 6a7 7 0 1 0 1 6" strokeWidth="2.400" /><path d="M18.500 2v7h-7z" fill="#000" stroke="none" /></Glyph></IconButton>
            <IconButton aria-label="焊盘"><Glyph s={16}><circle cx="10" cy="10" r="9" fill="#000" /><circle cx="10" cy="10" r="3" fill="#d00820" stroke="none" /></Glyph></IconButton>
            <IconButton aria-label="放置层">
              <Glyph s={17}><path d="M10 0v7M7 4l3 3 3-3M6 10h8M4 14h12" strokeWidth="2" /><path d="M0 18h20" strokeWidth="3" /></Glyph>
            </IconButton>
            <span>顶层</span>
          </PreviewBar>
          <Blank />
          <Preview>
            <FillSvg>
              <Grid ox={25} oy={22} pitch={33.72} />
              <Board x={25} y={89} k={1.022} copper="#00ff3c" pad="#50dcff" silk="#ffffff" wire="#ffe4d4" />
              <text x="244" y="269" fontSize="12" fill="#b4b4b4">拖放</text>
            </FillSvg>
          </Preview>
        </Dock>
      </Workspace>

      <StatusBar>
        <Cell $w={83}>
          <Coords><dt>X:</dt><dd>41.000 mm</dd><dt>Y:</dt><dd>20.077 mm</dd></Coords>
        </Cell>
        <Cell $w={184}>
          <LayerTable>
            <tbody>
              <tr><th scope="row">显示层</th>{layers.map(([n, c]) => <LayerName key={n} $fg={c}><b>{n}</b></LayerName>)}</tr>
              <tr><th scope="row">编辑</th>{layers.map(([n]) => <td key={n}><Radio type="radio" name="layer" aria-label={n} defaultChecked={n === "B2"} /></td>)}</tr>
            </tbody>
          </LayerTable>
          <Help>?</Help>
        </Cell>
        <Cell $w={37}><svg width="24" height="20" fill="none" stroke="#999" strokeWidth="3"><path d="M1 3h8l8 9" /><circle cx="18" cy="14" r="3" strokeWidth="2" /></svg></Cell>
        <Cell $w={37}><svg width="28" height="28" fill="none" stroke="#555"><circle cx="14" cy="14" r="6" stroke="#8a8a8a" strokeWidth="4" /><path d="M14 0v28M0 14h28" /></svg></Cell>
        <Cell $w={37}><svg width="20" height="16" fill="none" stroke="#444" strokeWidth="2.200"><path d="M3 14c-3-3 0-7 5-6s4-6 8-6 3 5 0 8-9 7-13 4z" /></svg></Cell>
        <Cell><StatusLine /></Cell>
      </StatusBar>

      <TaskBar>
        <StartButton aria-label="开始">
          <svg width="38" height="38" viewBox="0 0 38 38">
            <defs><radialGradient id="orb" cx=".5" cy=".9" r=".9"><stop offset="0" stopColor="#6fe0ff" /><stop offset=".45" stopColor="#1f6fa8" /><stop offset="1" stopColor="#5a7f9c" /></radialGradient></defs>
            <circle cx="19" cy="19" r="18" fill="url(#orb)" stroke="#174c66" />
            <path d="M10 12c3-2 6-1 8 0l-2 7c-2-1-5-2-8 0z" fill="#f06a35" /><path d="M20 13c2 1 5 2 9 0l-2 7c-3 2-6 1-9 0z" fill="#9acb3c" />
            <path d="M8 21c3-2 6-1 8 0l-2 7c-2-1-5-2-8 0z" fill="#5ab6ee" /><path d="M17 22c3 1 6 2 9 0l-2 7c-3 2-6 1-9 0z" fill="#fcd03c" />
          </svg>
        </StartButton>
        <TaskButton aria-label="资源管理器" $w={51} $bg="linear-gradient(135deg, #d9f1f0, #6fcfce 40%, #4cc3c2)">
          <svg width="34" height="32" viewBox="0 0 34 32"><path d="M2 5h10l2-2h16v25H2z" fill="#e8c866" /><path d="M4 3h8v4H4z" fill="#3d8a3d" /><path d="M17 2h9v4h-9z" fill="#fff" /><path d="M1 8h32v19H1z" fill="#f9e5a0" stroke="#c9a240" /><path d="M6 31V19h22v12h-5v-7H11v7z" fill="#a5daf2" stroke="#4c96bd" /></svg>
        </TaskButton>
        <StackEdge />
        <TaskButton aria-label="浏览器" $bg="linear-gradient(135deg, #b8e8e6, #5fcac9 45%, #45c2c2)">
          <svg width="32" height="34" viewBox="0 0 32 34" fill="none"><circle cx="16" cy="17" r="14" fill="#eafbe6" /><path d="M9 18h16c0-11-17-12-17-1 0 11 13 12 17 5" stroke="#55b82c" strokeWidth="5" /><path d="M3 31C-2 24 22-4 29 4" stroke="#7bd048" strokeWidth="2" /></svg>
        </TaskButton>
        <TaskButton aria-label="QQ" $bg="linear-gradient(135deg, #f4b070, #f2c24a 45%, #dd8d1c)">
          <svg width="32" height="34" viewBox="0 0 32 34"><ellipse cx="10" cy="31" rx="6" ry="2.500" fill="#f5a800" /><ellipse cx="22" cy="31" rx="6" ry="2.500" fill="#f5a800" /><path d="M7 12c0-15 18-15 18 0 4 5 6 9 5 14l-4-2c-3 9-17 9-20 0l-4 2c-1-5 1-9 5-14z" fill="#111" /><ellipse cx="16" cy="23" rx="8" ry="8" fill="#fff" /><ellipse cx="13" cy="8" rx="2" ry="3" fill="#fff" /><ellipse cx="19" cy="8" rx="2" ry="3" fill="#fff" /><ellipse cx="16" cy="13" rx="5" ry="2" fill="#f5a800" /><path d="M6 15c6 4 14 4 20 0v4c-5 3-9 3-13 2v5H9v-6c-2 0-3-1-3-2z" fill="#e02020" /></svg>
        </TaskButton>
        <TaskButton aria-label="迅雷" $bg="linear-gradient(90deg, #3fc84c, #52d06c 28%, #6fd0cf 34%, #49c3c2)">
          <svg width="30" height="30" viewBox="0 0 30 30"><rect width="30" height="30" rx="4" fill="#fff" /><path d="M2 6c7 0 9 3 12 6 3-5 6-8 11-9-2 3-1 6-1 8 1 2 4 2 4 3-3 1-4 7-12 9l2 4c-4 0-6-2-9-5l2-1c-4-2-6-5-6-8l3 1C5 12 3 9 2 6z" fill="#3a80e8" /></svg>
        </TaskButton>
        <TaskButton aria-label="Sprint-Layout" $bg="linear-gradient(135deg, #e3f6f5, #a6e3e2 50%, #8adad9)"><SprintLogo s={33} /></TaskButton>
        <Tray>
          <TrayButton aria-label="输入法"><svg width="14" height="14"><rect width="14" height="14" fill="#2478e8" /><circle cx="7" cy="6.500" r="4" fill="none" stroke="#fff" strokeWidth="2" /><path d="M9 9l3 3" stroke="#fff" strokeWidth="2" /></svg></TrayButton>
          <TrayButton>中</TrayButton>
          <TrayButton $w={12} aria-label="更多"><Caret c="#fff" w={6} /></TrayButton>
          <TrayButton aria-label="红蜻蜓"><svg width="16" height="16"><rect width="16" height="16" rx="1" fill="#eee" /><path d="M1 4l6 2V3h2v3l6-2-4 4H9v6H7V8H5z" fill="#c4143c" /></svg></TrayButton>
          <TrayButton aria-label="迅雷"><svg width="16" height="16" viewBox="0 0 30 30"><rect width="30" height="30" fill="#fff" /><path d="M2 6c7 0 9 3 12 6 3-5 6-8 11-9-2 3-1 6-1 8 1 2 4 2 4 3-3 1-4 7-12 9l2 4c-4 0-6-2-9-5l2-1c-4-2-6-5-6-8z" fill="#2070e0" /></svg></TrayButton>
          <TrayButton aria-label="网络"><svg width="16" height="16" fill="#2b6a80" stroke="#fff" strokeWidth="1.300"><path d="M5 4h10v8H5zM7 14.500h6M2 1v4h3V1M3.500 5v9H7" /></svg></TrayButton>
          <TrayButton aria-label="QQ"><svg width="15" height="16" viewBox="0 0 32 34"><path d="M7 12c0-15 18-15 18 0 6 8 5 20-9 20S1 20 7 12z" fill="#111" /><circle cx="16" cy="23" r="7" fill="#fff" /><path d="M5 14h22v5H5z" fill="#e02020" /><ellipse cx="16" cy="11" rx="5" ry="2.500" fill="#f5a800" /><path d="M4 30h24v4H4z" fill="#f5a800" /></svg></TrayButton>
          <TrayButton aria-label="安全"><svg width="15" height="16"><path d="M7.500 1l6 2c0 6-1 10-6 12-5-2-6-6-6-12z" fill="#8cc63c" stroke="#f4f4d0" strokeWidth="1.500" /><path d="M8 4L5 9h4l-2 4" stroke="#fff" fill="none" strokeWidth="1.300" /></svg></TrayButton>
          <TrayButton aria-label="360"><svg width="17" height="17"><circle cx="8.500" cy="8.500" r="8" fill="#f2dc20" /><path d="M8.500 4v9M4 8.500h9" stroke="#0a6a1a" strokeWidth="3" /></svg></TrayButton>
          <TrayButton aria-label="音量"><svg width="16" height="14" fill="#fff" stroke="#fff"><path d="M1 5h3l4-4v12L4 9H1z" /><path d="M10 4c2 2 2 4 0 6M12 2c3 3 3 7 0 10" fill="none" /></svg></TrayButton>
        </Tray>
      </TaskBar>

      <SpeedBall><p>75.7<small>KB/S</small></p><b>免费加速</b></SpeedBall>
      <CountBall>41</CountBall>
      <InputPill>A</InputPill>
      <CastBall aria-label="投屏"><svg width="36" height="30" fill="none" stroke="#fff" strokeWidth="2"><path d="M28 8V2H2v18h18M10 25h8M14 20v5M32 13h-8v14h9V13zM19 9l4 4M23 9v4h-4" /></svg></CastBall>
      <Clock>下午 10:33</Clock>
      <Watermark><strong>矿石收音机</strong><a href="#site">www.crystalradio.cn</a></Watermark>
    </Window>
  );
}
